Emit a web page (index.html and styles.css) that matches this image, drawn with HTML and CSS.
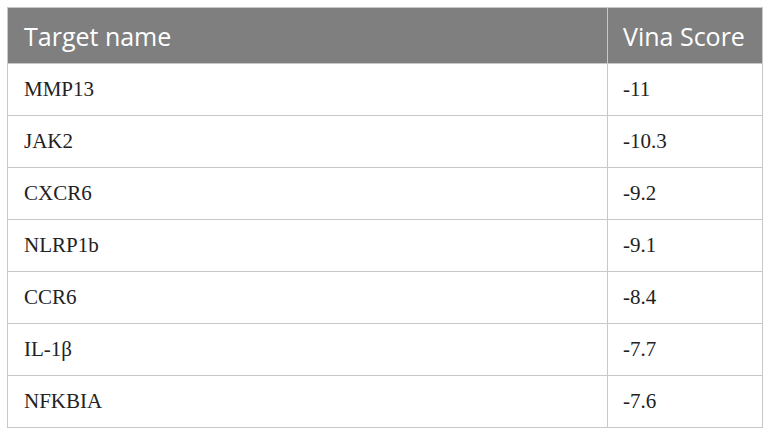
FILE: index.html
```html
<!DOCTYPE html>
<html>
<head>
<meta charset="utf-8">
<link rel="stylesheet" href="styles.css">
</head>
<body>
<table class="tbl">
  <thead>
    <tr><th class="c1">Target name</th><th class="c2">Vina Score</th></tr>
  </thead>
  <tbody>
    <tr><td>MMP13</td><td>-11</td></tr>
    <tr><td>JAK2</td><td>-10.3</td></tr>
    <tr><td>CXCR6</td><td>-9.2</td></tr>
    <tr><td>NLRP1b</td><td>-9.1</td></tr>
    <tr><td>CCR6</td><td>-8.4</td></tr>
    <tr><td>IL-1β</td><td>-7.7</td></tr>
    <tr><td>NFKBIA</td><td>-7.6</td></tr>
  </tbody>
</table>
</body>
</html>
```
FILE: styles.css
```css
html, body {
  margin: 0;
  padding: 0;
  background: #ffffff;
}
body {
  padding: 7px 0 0 7px;
}
.tbl {
  border-collapse: collapse;
  width: 756px;
  table-layout: fixed;
}
.tbl th {
  background: #7f7f7f;
  color: #ffffff;
  font-family: "Open Sans", sans-serif;
  font-weight: 400;
  font-size: 25px;
  text-align: left;
  height: 56px;
  padding: 0 0 0 16px;
  border: 1px solid #c8c8c8;
  box-sizing: border-box;
}
.tbl th.c1 { width: 600px; }
.tbl th.c2 { padding-left: 15px; }
.tbl td {
  font-family: "Liberation Serif", "Times New Roman", serif;
  font-size: 21px;
  color: #222222;
  height: 52px;
  padding: 0 0 0 16px;
  border: 1px solid #c8c8c8;
  box-sizing: border-box;
}
.tbl td + td { padding-left: 15px; }
```
